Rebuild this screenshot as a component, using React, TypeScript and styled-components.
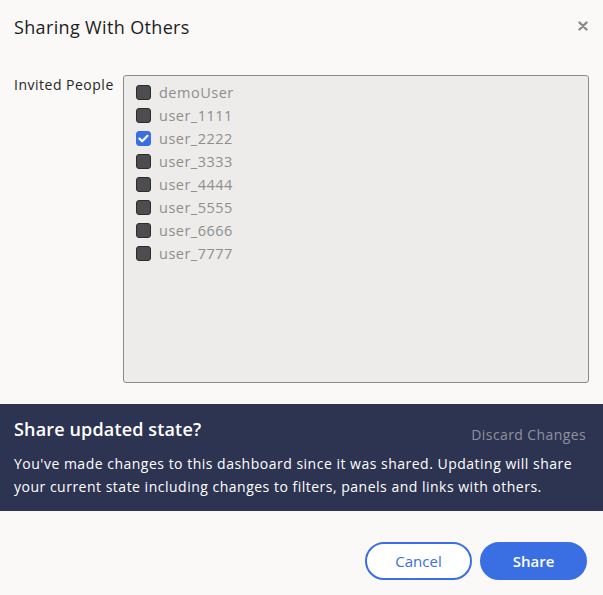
import React, { useState } from "react";
import styled, { createGlobalStyle } from "styled-components";

const Global = createGlobalStyle`
  html, body { margin: 0; padding: 0; background: #faf9f8; }
  body { font-family: "Open Sans", "Noto Sans", sans-serif; }
  * { box-sizing: border-box; }
`;

const Dialog = styled.div`
  width: 603px;
  height: 595px;
  background: #faf9f8;
  display: flex;
  flex-direction: column;
`;

const Header = styled.div`
  display: flex;
  justify-content: space-between;
  align-items: flex-start;
  padding: 15px 14px 0 14px;
  height: 52px;
`;

const Title = styled.h2`
  margin: 0;
  font-size: 18px;
  font-weight: 400;
  color: #1c1c1c;
  line-height: 24px;
  letter-spacing: 0.35px;
`;

const Close = styled.button`
  border: none;
  background: none;
  padding: 0;
  margin: 4px -1px 0 0;
  width: 14px;
  height: 14px;
  display: flex;
  align-items: center;
  justify-content: center;
  cursor: pointer;
`;

const Body = styled.div`
  display: grid;
  grid-template-columns: 109px 466px;
  padding: 23px 14px 0 14px;
  height: 352px;
`;

const Label = styled.label`
  font-size: 14px;
  color: #262626;
  line-height: 20px;
  letter-spacing: 0.5px;
`;

const ListBox = styled.div`
  height: 308px;
  border: 1px solid #8c8c8c;
  border-radius: 3px;
  background: #edecea;
  padding: 5px 12px;
  display: flex;
  flex-direction: column;
`;

const Row = styled.label`
  display: flex;
  align-items: center;
  gap: 8px;
  height: 23px;
  font-size: 14.5px;
  letter-spacing: 0.5px;
  color: #8e8e8e;
  cursor: pointer;
`;

const Box = styled.span<{ $checked: boolean }>`
  width: 15px;
  height: 15px;
  border-radius: 3px;
  background: ${(p) => (p.$checked ? "#3a6fe3" : "#4d4d4f")};
  border: 1px solid ${(p) => (p.$checked ? "#3a6fe3" : "#2c2c2e")};
  display: flex;
  align-items: center;
  justify-content: center;
  flex-shrink: 0;
`;

const Banner = styled.div`
  background: #2d3452;
  padding: 13px 17px 0 14px;
  height: 107px;
  color: #ffffff;
`;

const BannerTop = styled.div`
  display: flex;
  justify-content: space-between;
  align-items: flex-start;
`;

const BannerTitle = styled.div`
  font-size: 18px;
  font-weight: 600;
  line-height: 24px;
  letter-spacing: 0.15px;
`;

const Discard = styled.button`
  border: none;
  background: none;
  padding: 8px 0 0 0;
  color: #8f929c;
  font-family: inherit;
  font-size: 14px;
  letter-spacing: 0.4px;
  cursor: pointer;
`;

const BannerText = styled.p`
  margin: 8px 0 0 0;
  font-size: 14px;
  line-height: 23px;
  letter-spacing: 0.5px;
`;

const Footer = styled.div`
  display: flex;
  justify-content: flex-end;
  gap: 8px;
  padding: 31px 16px 0 0;
`;

const Btn = styled.button<{ $primary?: boolean }>`
  width: 107px;
  height: 38px;
  border-radius: 19px;
  border: 2px solid #3a6fe3;
  background: ${(p) => (p.$primary ? "#3a6fe3" : "#ffffff")};
  color: ${(p) => (p.$primary ? "#ffffff" : "#3a6fe3")};
  font-family: inherit;
  font-size: 15px;
  font-weight: ${(p) => (p.$primary ? 600 : 400)};
  cursor: pointer;
`;

const users = ["demoUser", "user_1111", "user_2222", "user_3333", "user_4444", "user_5555", "user_6666", "user_7777"];

export default function App() {
  const [checked, setChecked] = useState<Record<string, boolean>>({ user_2222: true });
  return (
    <Dialog>
      <Global />
      <Header>
        <Title>Sharing With Others</Title>
        <Close aria-label="Close">
          <svg width="10" height="10" viewBox="0 0 10 10">
            <path d="M1.5 1.5 L8.5 8.5 M8.5 1.5 L1.5 8.5" stroke="#8a8a8a" strokeWidth="2.4" strokeLinecap="round" />
          </svg>
        </Close>
      </Header>
      <Body>
        <Label>Invited People</Label>
        <ListBox>
          {users.map((u) => (
            <Row key={u} onClick={() => setChecked({ ...checked, [u]: !checked[u] })}>
              <Box $checked={!!checked[u]}>
                {checked[u] && (
                  <svg width="11" height="9" viewBox="0 0 11 9">
                    <path d="M1.5 4.6 L4.2 7.2 L9.5 1.8" stroke="#fff" strokeWidth="2.2" fill="none" strokeLinecap="round" strokeLinejoin="round" />
                  </svg>
                )}
              </Box>
              {u}
            </Row>
          ))}
        </ListBox>
      </Body>
      <Banner>
        <BannerTop>
          <BannerTitle>Share updated state?</BannerTitle>
          <Discard>Discard Changes</Discard>
        </BannerTop>
        <BannerText>
          You've made changes to this dashboard since it was shared. Updating will share your current state including changes to filters, panels and links with others.
        </BannerText>
      </Banner>
      <Footer>
        <Btn>Cancel</Btn>
        <Btn $primary>Share</Btn>
      </Footer>
    </Dialog>
  );
}
